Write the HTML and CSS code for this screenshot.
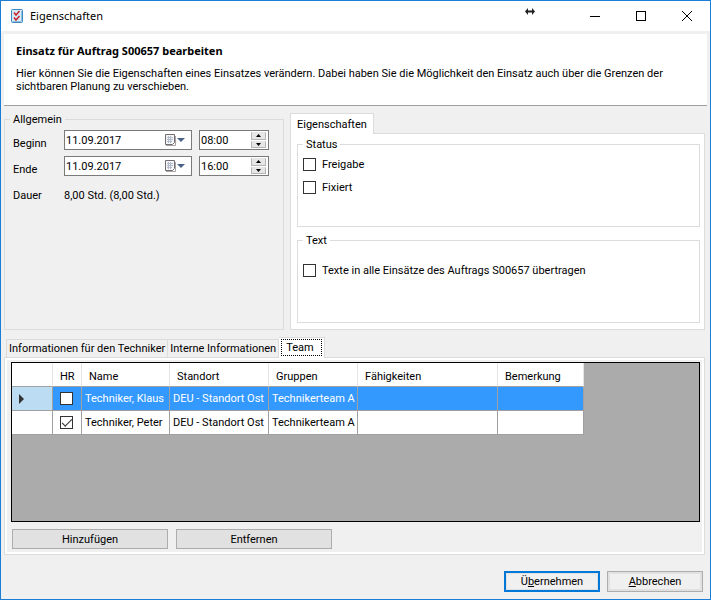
FILE: index.html
```html
<!DOCTYPE html>
<html lang="de">
<head>
<meta charset="utf-8">
<title>Eigenschaften</title>
<link rel="stylesheet" href="styles.css">
</head>
<body>
<div class="window">
  <header class="titlebar">
    <svg class="app-icon" width="12" height="14" viewBox="0 0 12 14">
      <rect x=".5" y=".5" width="11" height="13" rx="1" fill="#d5e9f6" stroke="#3c87bd"/>
      <path d="M1.5 12.5h9M10.5 2v10" stroke="#8fc3e6" fill="none"/>
      <path d="M3 3.500l2 2.500 3.500-4M3 8.500l2 2.500 3.500-4" stroke="#c8252c" stroke-width="1.500" fill="none"/>
    </svg>
    <span class="window-title">Eigenschaften</span>
    <svg class="resize-mark" width="10" height="7" viewBox="0 0 10 7"><path d="M0 3.500L3 0v2.500h4V0l3 3.500L7 7V4.500H3V7z" fill="#222"/></svg>
    <div class="window-controls">
      <button class="window-button" type="button" aria-label="Minimieren"><svg width="12" height="12" viewBox="0 0 12 12"><path d="M1 6.500h10" stroke="#000"/></svg></button>
      <button class="window-button" type="button" aria-label="Maximieren"><svg width="12" height="12" viewBox="0 0 12 12"><rect x="1.500" y="1.500" width="9" height="9" fill="none" stroke="#000"/></svg></button>
      <button class="window-button" type="button" aria-label="Schließen"><svg width="12" height="12" viewBox="0 0 12 12"><path d="M1 1l10 10M11 1L1 11" stroke="#000"/></svg></button>
    </div>
  </header>

  <section class="intro">
    <h1 class="intro-title">Einsatz für Auftrag S00657 bearbeiten</h1>
    <p class="intro-text">Hier können Sie die Eigenschaften eines Einsatzes verändern. Dabei haben Sie die Möglichkeit den Einsatz auch über die Grenzen der<br>sichtbaren Planung zu verschieben.</p>
  </section>

  <main class="content">
    <div class="upper">
      <fieldset class="group general">
        <legend>Allgemein</legend>
        <div class="times">
          <label for="start-date">Beginn</label>
          <div class="field">
            <input id="start-date" type="text" value="11.09.2017">
            <button class="calendar" type="button" aria-label="Kalender öffnen"><svg width="22" height="14" viewBox="0 0 22 14"><path d="M1.500 1.500h9v8l-2 2h-7z" fill="#f4f5f8" stroke="#756c70"/><path d="M3 4.500h6M3 6.500h6M3 8.500h5M4.500 3v7M6.500 3v7" stroke="#b4bccb"/><path d="M2 12.500h9.500V3" stroke="#a9a2a4" fill="none"/><path d="M13 5h8l-4 4z" fill="#4a6287"/></svg></button>
          </div>
          <div class="field">
            <input type="text" value="08:00" aria-label="Beginn Uhrzeit">
            <div class="spinner"><button type="button" aria-label="Später"><svg width="5" height="3" viewBox="0 0 5 3"><path d="M0 3L2.500 0 5 3z"/></svg></button><button type="button" aria-label="Früher"><svg width="5" height="3" viewBox="0 0 5 3"><path d="M0 0h5L2.500 3z"/></svg></button></div>
          </div>
          <label for="end-date">Ende</label>
          <div class="field">
            <input id="end-date" type="text" value="11.09.2017">
            <button class="calendar" type="button" aria-label="Kalender öffnen"><svg width="22" height="14" viewBox="0 0 22 14"><path d="M1.500 1.500h9v8l-2 2h-7z" fill="#f4f5f8" stroke="#756c70"/><path d="M3 4.500h6M3 6.500h6M3 8.500h5M4.500 3v7M6.500 3v7" stroke="#b4bccb"/><path d="M2 12.500h9.500V3" stroke="#a9a2a4" fill="none"/><path d="M13 5h8l-4 4z" fill="#4a6287"/></svg></button>
          </div>
          <div class="field">
            <input type="text" value="16:00" aria-label="Ende Uhrzeit">
            <div class="spinner"><button type="button" aria-label="Später"><svg width="5" height="3" viewBox="0 0 5 3"><path d="M0 3L2.500 0 5 3z"/></svg></button><button type="button" aria-label="Früher"><svg width="5" height="3" viewBox="0 0 5 3"><path d="M0 0h5L2.500 3z"/></svg></button></div>
          </div>
          <span class="duration-label">Dauer</span>
          <output class="duration">8,00 Std. (8,00 Std.)</output>
        </div>
      </fieldset>

      <section class="properties">
        <div class="tabs" role="tablist">
          <button class="tab tab-only" type="button" role="tab" aria-selected="true">Eigenschaften</button>
        </div>
        <div class="properties-page" role="tabpanel">
          <fieldset class="group status">
            <legend>Status</legend>
            <label class="check"><input type="checkbox">Freigabe</label>
            <label class="check"><input type="checkbox">Fixiert</label>
          </fieldset>
          <fieldset class="group text">
            <legend>Text</legend>
            <label class="check"><input type="checkbox">Texte in alle Einsätze des Auftrags S00657 übertragen</label>
          </fieldset>
        </div>
      </section>
    </div>

    <section class="details">
      <div class="tabs details-tabs" role="tablist">
        <button class="tab" type="button" role="tab" aria-selected="false">Informationen für den Techniker</button>
        <button class="tab" type="button" role="tab" aria-selected="false">Interne Informationen</button>
        <button class="tab tab-current" type="button" role="tab" aria-selected="true"><span class="focus">Team</span></button>
      </div>
      <div class="team-page" role="tabpanel">
        <div class="grid">
          <table>
            <colgroup><col class="c-mark"><col class="c-hr"><col class="c-name"><col class="c-site"><col class="c-groups"><col class="c-skills"><col class="c-note"></colgroup>
            <thead>
              <tr><th></th><th>HR</th><th>Name</th><th>Standort</th><th>Gruppen</th><th>Fähigkeiten</th><th>Bemerkung</th></tr>
            </thead>
            <tbody>
              <tr class="selected"><td class="mark"><svg width="5" height="10" viewBox="0 0 5 10"><path d="M0 0l5 5-5 5z" fill="#333"/></svg></td><td class="hr"><input type="checkbox" aria-label="HR Techniker, Klaus"></td><td>Techniker, Klaus</td><td>DEU - Standort Ost</td><td>Technikerteam A</td><td></td><td></td></tr>
              <tr><td class="mark"></td><td class="hr"><input type="checkbox" checked aria-label="HR Techniker, Peter"></td><td>Techniker, Peter</td><td>DEU - Standort Ost</td><td>Technikerteam A</td><td></td><td></td></tr>
            </tbody>
          </table>
        </div>
        <div class="team-actions">
          <button class="button" type="button">Hinzufügen</button>
          <button class="button" type="button">Entfernen</button>
        </div>
      </div>
    </section>
  </main>

  <footer class="footer">
    <button class="dialog-button primary" type="button"><span>Ü<u>b</u>ernehmen</span></button>
    <button class="dialog-button" type="button"><span><u>A</u>bbrechen</span></button>
  </footer>
</div>
</body>
</html>
```
FILE: styles.css
```css
* {
  box-sizing: border-box;
}

body {
  margin: 0;
  color: #000;
  font: 11px/13px "Roboto", "Liberation Sans", sans-serif;
}

button,
input {
  margin: 0;
  padding: 0;
  border: 0;
  color: inherit;
  font: inherit;
}

svg {
  display: block;
}

.window {
  display: flex;
  flex-direction: column;
  min-height: 100vh;
  border: 1px solid #1a7fd4;
  background: #f0f0f0;
}

/* Title bar */
.titlebar {
  position: relative;
  display: flex;
  align-items: center;
  height: 30px;
  padding-left: 10px;
  background: #fff;
}

.window-title {
  margin-left: 7px;
  font: 11px/16px "Noto Sans", sans-serif;
}

.resize-mark {
  position: absolute;
  top: 7px;
  right: 175px;
}

.window-controls {
  display: flex;
  margin-left: auto;
}

.window-button {
  display: flex;
  align-items: center;
  justify-content: center;
  width: 46px;
  height: 30px;
  background: none;
}

/* Introduction */
.intro {
  margin: 3px 3px 0;
  padding: 10px 12px 12px;
  border-bottom: 1px solid #a0a0a0;
  background: #fff;
}

.intro-title {
  margin: 0 0 9px;
  font: bold 11px/14px "Noto Sans", sans-serif;
}

.intro-text {
  margin: 0;
}

/* Content */
.content {
  display: flex;
  flex: 1;
  flex-direction: column;
  gap: 7px;
  padding: 7px 5px 0 3px;
}

.upper {
  display: flex;
  gap: 6px;
}

.group {
  min-width: 0;
  margin: 0;
  padding: 0 5px;
  border: 1px solid #dcdcdc;
}

.group legend {
  padding: 0 3px;
}

.general {
  flex: 0 0 280px;
}

.times {
  display: grid;
  grid-template-columns: 44px 128px 70px;
  grid-template-rows: 20px 20px 26px;
  gap: 6px 7px;
  padding: 4px 3px 0;
}

.times label {
  align-self: end;
}

.duration-label,
.duration {
  align-self: center;
}

.duration {
  grid-column: 2 / 4;
}

.field {
  display: flex;
  min-width: 0;
  border: 1px solid #7a7a7a;
  background: #fff;
}

.field input {
  flex: 1;
  min-width: 0;
  padding-left: 1px;
  background: none;
}

.calendar {
  display: flex;
  align-items: center;
  padding-right: 5px;
  background: none;
}

.spinner {
  display: flex;
  flex-direction: column;
  gap: 1px;
  width: 15px;
  margin: 1px 2px;
}

.spinner button {
  display: flex;
  flex: 1;
  align-items: center;
  justify-content: center;
  border: 1px solid #b4b4b4;
  border-top-color: #e6e6e6;
  background: #e6e6e6;
}

/* Tabs */
.tabs {
  display: flex;
  align-items: flex-end;
  height: 20px;
}

.tab {
  height: 18px;
  padding: 0 2px;
  border: 1px solid #dcdcdc;
  border-bottom: 0;
  background: #f0f0f0;
}

.tab + .tab {
  border-left: 0;
}

.tab-only,
.tab-current {
  position: relative;
  height: 21px;
  margin-bottom: -1px;
  background: #fff;
}

.tab-only {
  padding: 0 6px;
}

.tab-current {
  padding: 0 2px 1px;
}

.focus {
  display: block;
  padding: 1px 7px 1px 4px;
  border: 1px dotted #000;
}

.properties {
  flex: 1;
}

.properties-page {
  display: flex;
  flex-direction: column;
  gap: 7px;
  padding: 4px 4px 6px 6px;
  border: 1px solid #dcdcdc;
  background: #fff;
}

.status,
.text {
  height: 89px;
}

.status {
  padding-top: 7px;
}

.text {
  padding-top: 17px;
}

.check {
  display: flex;
  align-items: center;
  gap: 6px;
  width: max-content;
  margin-bottom: 10px;
}

input[type="checkbox"] {
  display: block;
  width: 13px;
  height: 13px;
  border: 1px solid #333;
  background: #fff;
  appearance: none;
}

input[type="checkbox"]:checked::before {
  display: block;
  width: 9px;
  height: 4px;
  margin: 2px 1px;
  border: solid #333;
  border-width: 0 0 1px 1px;
  content: "";
  transform: rotate(-45deg);
}

/* Team page */
.details {
  display: flex;
  flex: 1;
  flex-direction: column;
}

.details-tabs {
  padding-left: 2px;
}

.team-page {
  display: flex;
  flex: 1;
  flex-direction: column;
  gap: 7px;
  padding: 2px 2px 5px 3px;
  border: 1px solid #dcdcdc;
  background: #f0f0f0;
  box-shadow: inset 0 0 0 2px #fff;
}

.grid {
  flex: 1;
  margin: 2px 2px 0 3px;
  border: 1px solid #000;
  background: #ababab;
}

table {
  width: 572px;
  border-collapse: separate;
  border-spacing: 0;
  table-layout: fixed;
}

.c-mark { width: 41px; }
.c-hr { width: 29px; }
.c-name { width: 88px; }
.c-site { width: 99px; }
.c-groups { width: 89px; }
.c-skills { width: 140px; }
.c-note { width: 86px; }

th,
td {
  height: 24px;
  padding: 0 3px;
  border-right: 1px solid #a0a0a0;
  border-bottom: 1px solid #a0a0a0;
  background: #fff;
  text-align: left;
  white-space: nowrap;
}

th {
  padding: 3px 7px 0;
  border-right-color: #e5e5e5;
  font-weight: normal;
}

.selected td {
  background: #3399ff;
  color: #fff;
}

.selected .mark {
  background: #bcdcf4;
}

.mark {
  padding-left: 7px;
}

.hr {
  padding-left: 7px;
}

.team-actions {
  display: flex;
  gap: 8px;
  padding-left: 4px;
}

.button {
  width: 156px;
  height: 20px;
  border: 1px solid #adadad;
  background: #e1e1e1;
}

/* Footer */
.footer {
  display: flex;
  gap: 7px;
  justify-content: flex-end;
  padding: 16px 7px 7px;
}

.dialog-button {
  width: 96px;
  height: 21px;
  border: 1px solid #adadad;
  background: #f0f0f0;
  box-shadow: inset 0 0 0 2px #e1e1e1;
}

.primary {
  border: 2px solid #0078d7;
  box-shadow: inset 0 0 0 1px #e1e1e1;
}
```
